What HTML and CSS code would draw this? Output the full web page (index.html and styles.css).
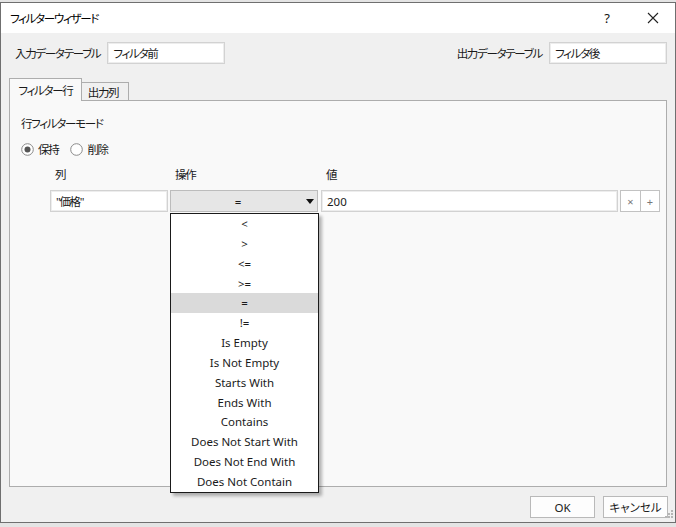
FILE: index.html
```html
<!DOCTYPE html>
<html lang="ja">
<head>
<meta charset="utf-8">
<title>フィルターウィザード</title>
<link rel="stylesheet" href="styles.css">
</head>
<body>
<div class="dialog">
  <div class="titlebar">
    <span class="title">フィルターウィザード</span>
    <span class="help latin">?</span>
    <span class="close"><svg width="12" height="12" viewBox="0 0 12 12"><path d="M1 1 L11 11 M11 1 L1 11" stroke="#222" stroke-width="1.1" fill="none"/></svg></span>
  </div>
  <div class="body">
    <div class="io-row">
      <div class="io-group">
        <span class="lbl">入力データテーブル</span>
        <div class="field io-field">フィルタ前</div>
      </div>
      <div class="io-group right">
        <span class="lbl">出力データテーブル</span>
        <div class="field io-field">フィルタ後</div>
      </div>
    </div>
    <div class="tabs">
      <div class="tab active">フィルター行</div>
      <div class="tab">出力列</div>
    </div>
    <div class="panel">
      <div class="mode-label">行フィルターモード</div>
      <div class="radios">
        <span class="radio"><svg width="13" height="13" viewBox="0 0 13 13"><circle cx="6.5" cy="6.5" r="5.8" fill="#fff" stroke="#8a8a8a" stroke-width="1"/><circle cx="6.5" cy="6.5" r="3" fill="#555"/></svg>保持</span>
        <span class="radio"><svg width="13" height="13" viewBox="0 0 13 13"><circle cx="6.5" cy="6.5" r="5.8" fill="#fff" stroke="#8a8a8a" stroke-width="1"/></svg>削除</span>
      </div>
      <div class="cond-row heads">
        <span class="c-col">列</span>
        <span class="c-op">操作</span>
        <span class="c-val">値</span>
      </div>
      <div class="cond-row cond">
        <div class="field c-col">"価格"</div>
        <div class="select c-op">
          <span class="sel-val latin">=</span>
          <svg class="arrow" width="8" height="5" viewBox="0 0 8 5"><path d="M0 0 H8 L4 5 Z" fill="#111"/></svg>
          <ul class="dropdown latin">
            <li>&lt;</li>
            <li>&gt;</li>
            <li>&lt;=</li>
            <li>&gt;=</li>
            <li class="hl">=</li>
            <li>!=</li>
            <li>Is Empty</li>
            <li>Is Not Empty</li>
            <li>Starts With</li>
            <li>Ends With</li>
            <li>Contains</li>
            <li>Does Not Start With</li>
            <li>Does Not End With</li>
            <li>Does Not Contain</li>
          </ul>
        </div>
        <div class="field c-val latin">200</div>
        <div class="mini-btns">
          <span class="mini">×</span>
          <span class="mini">+</span>
        </div>
      </div>
    </div>
    <div class="footer">
      <button class="btn latin">OK</button>
      <button class="btn">キャンセル</button>
    </div>
  </div>
  <svg class="grip" width="10" height="10" viewBox="0 0 10 10">
    <rect x="8" y="2" width="2" height="2" fill="#b5b5b5"/>
    <rect x="5" y="5" width="2" height="2" fill="#b5b5b5"/>
    <rect x="8" y="5" width="2" height="2" fill="#b5b5b5"/>
    <rect x="2" y="8" width="2" height="2" fill="#b5b5b5"/>
    <rect x="5" y="8" width="2" height="2" fill="#b5b5b5"/>
    <rect x="8" y="8" width="2" height="2" fill="#b5b5b5"/>
  </svg>
</div>
</body>
</html>
```
FILE: styles.css
```css
* { box-sizing: border-box; }
html, body {
  margin: 0;
  padding: 0;
}
body {
  width: 676px;
  height: 527px;
  background: #e4e4e4;
  padding-top: 2px;
  font-family: "Noto Sans", "Noto Sans CJK JP", sans-serif;
  font-size: 11.5px;
  letter-spacing: -1.3px;
  color: #1a1a1a;
  font-feature-settings: "palt";
  overflow: hidden;
}
.latin {
  letter-spacing: 0;
  font-size: 11.5px;
}
.dialog {
  position: relative;
  width: 676px;
  height: 521px;
  border: 1px solid #6f6f6f;
  display: flex;
  flex-direction: column;
  background: #f0f0f0;
}
.titlebar {
  height: 30px;
  background: #fff;
  display: flex;
  align-items: center;
  padding-left: 9px;
  flex: none;
}
.title { color: #000; }
.help {
  margin-left: auto;
  width: 46px;
  text-align: center;
  font-size: 13px;
  color: #111;
}
.close {
  width: 45px;
  display: flex;
  justify-content: center;
  align-items: center;
}
.body {
  flex: 1;
  padding: 9px 8px 0 8px;
  display: flex;
  flex-direction: column;
}
.io-row {
  height: 22px;
  display: flex;
  align-items: center;
  padding-left: 6px;
}
.io-group {
  display: flex;
  align-items: center;
  gap: 7px;
}
.io-group.right { margin-left: auto; }
.field {
  height: 22px;
  background: #fff;
  border: 1px solid #d2d2d2;
  box-shadow: inset 0 0 0 1px #ededed;
  padding: 0 5px;
  display: flex;
  align-items: center;
  white-space: nowrap;
}
.io-field { width: 118px; }
.tabs {
  margin-top: 14px;
  height: 22px;
  display: flex;
  align-items: flex-end;
  position: relative;
  z-index: 2;
}
.tab {
  height: 18px;
  width: 47px;
  border: 1px solid #adadad;
  border-left: none;
  border-bottom: none;
  background: #f0f0f0;
  display: flex;
  align-items: center;
  justify-content: center;
  padding-right: 4px;
}
.tab.active {
  height: 23px;
  width: 73px;
  margin-bottom: -1px;
  border-left: 1px solid #adadad;
  border-right: 1px solid #adadad;
  background: #f9f9f9;
  padding: 0 0 1px 0;
}
.panel {
  height: 387px;
  border: 1px solid #adadad;
  background: #f9f9f9;
  padding: 15px 0 0 11px;
  flex: none;
}
.mode-label {
  height: 16px;
  line-height: 16px;
}
.radios {
  margin-top: 9px;
  height: 16px;
  display: flex;
  align-items: center;
}
.radio {
  display: flex;
  align-items: center;
  gap: 4px;
  margin-right: 12px;
}
.cond-row {
  display: flex;
  margin-left: 29px;
}
.c-col { width: 118px; }
.c-op { width: 148px; margin-left: 2px; }
.c-val { width: 297px; margin-left: 3px; }
.heads {
  margin-top: 10px;
  height: 16px;
  line-height: 16px;
}
.heads span { padding-left: 5px; }
.cond {
  margin-top: 7px;
  height: 22px;
}
.select {
  position: relative;
  height: 22px;
  background: #e6e6e6;
  border: 1px solid #bcbcbc;
  display: flex;
  align-items: center;
  justify-content: center;
}
.sel-val { margin-left: -12px; }
.arrow {
  position: absolute;
  right: 3px;
  top: 8px;
}
.dropdown {
  position: absolute;
  left: -1px;
  top: 22px;
  width: 149px;
  margin: 0;
  padding: 0;
  list-style: none;
  background: #fff;
  border: 1px solid #1a1a1a;
  box-shadow: 3px 3px 3px rgba(0,0,0,0.28);
  z-index: 5;
}
.dropdown li {
  height: 19.85px;
  line-height: 19.85px;
  text-align: center;
  white-space: nowrap;
}
.dropdown li.hl { background: #dadada; }
.mini-btns {
  display: flex;
  height: 22px;
  margin-left: 2px;
}
.mini {
  width: 21px;
  height: 22px;
  border: 1px solid #c2c2c2;
  background: #fff;
  color: #777;
  font-size: 11px;
  letter-spacing: 0;
  display: flex;
  align-items: center;
  justify-content: center;
}
.mini + .mini { margin-left: -1px; width: 20px; }
.footer {
  margin-top: 9px;
  margin-right: -1px;
  display: flex;
  justify-content: flex-end;
  gap: 8px;
}
.btn {
  width: 65px;
  height: 22px;
  border: 1px solid #b9b9b9;
  background: #fdfdfd;
  font: inherit;
  color: #1a1a1a;
  padding: 0;
}
.grip {
  position: absolute;
  right: 2px;
  bottom: 4px;
}
```
